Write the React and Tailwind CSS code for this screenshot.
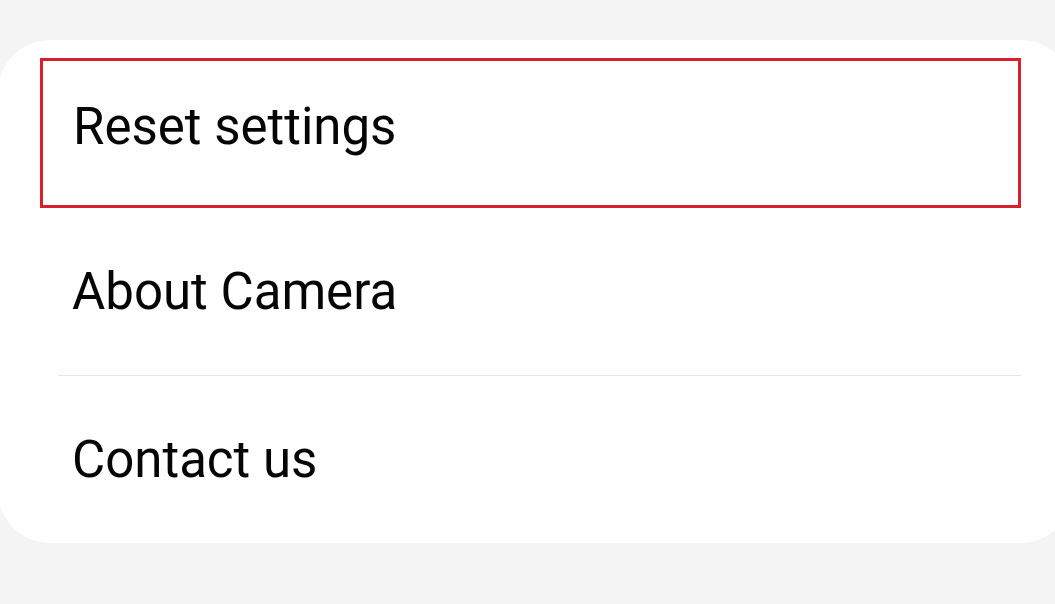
import React from 'react';

const items = ['Reset settings', 'About Camera', 'Contact us'];

const App = () => {
  return (
    <div className="w-[1055px] h-[604px] overflow-hidden bg-[#f4f4f4] pt-[40px]" style={{ fontFamily: 'Roboto, "Noto Sans", sans-serif' }}>
      <div className="w-[1075px] h-[503px] -ml-[2px] bg-[#fefefe] rounded-[52px] pt-[18px] pl-[42px] pr-[52px]">
        {/* Highlighted row */}
        <div className="h-[150px] border-[3px] border-[#d8202c] flex items-center pl-[30px] pb-[14px]">
          <span className="text-[51px] text-[#050505] leading-none">{items[0]}</span>
        </div>
        <div className="ml-[18px] border-b border-[#e4e4e4] h-[168px] flex items-center pl-[14px]">
          <span className="text-[51px] text-[#050505] leading-none">{items[1]}</span>
        </div>
        <div className="h-[166px] flex items-center pl-[32px]">
          <span className="text-[51px] text-[#050505] leading-none">{items[2]}</span>
        </div>
      </div>
    </div>
  );
};

export default App;
